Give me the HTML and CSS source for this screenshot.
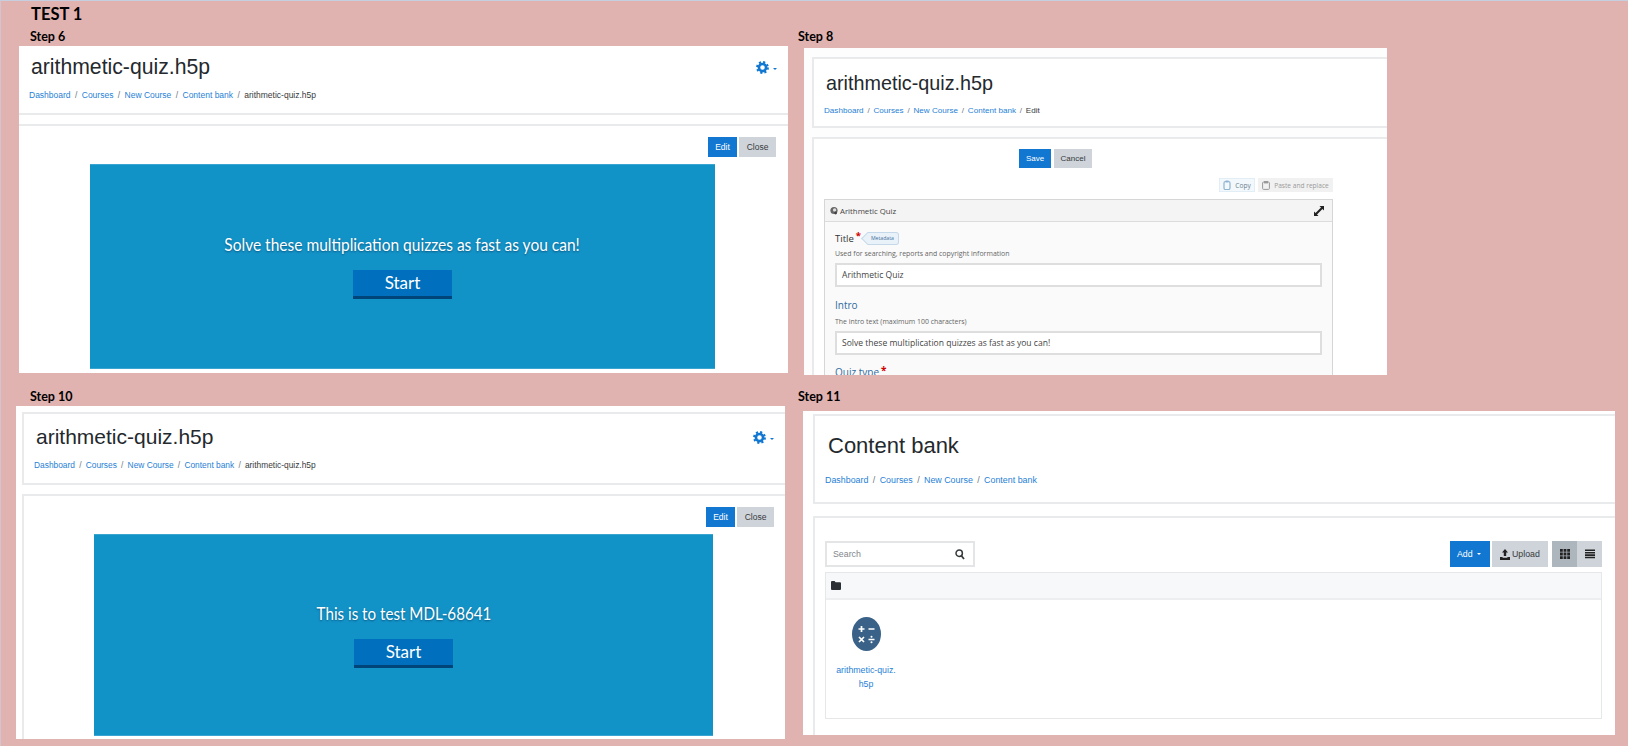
FILE: index.html
```html
<!DOCTYPE html>
<html lang="en">
<head>
    <meta charset="UTF-8">
    <title>Test 1</title>
    <link rel="stylesheet" href="styles.css">
</head>
<body>
    <svg class="icon-defs" width="0" height="0">
        <symbol id="gear" viewBox="0 0 16 16">
            <circle cx="8" cy="8" r="4.4" fill="none" stroke="currentColor" stroke-width="3.2"/>
            <circle cx="8" cy="8" r="6.6" fill="none" stroke="currentColor" stroke-width="2.6" stroke-dasharray="2.6 2.58"/>
        </symbol>
    </svg>

    <div class="sheet">
        <h1 class="test-title">TEST 1</h1>

        <div class="step-row">
            <section class="step step-6">
                <h2 class="step-label">Step 6</h2>
                <div class="shot shot-6">
                    <div class="card card-head">
                        <div class="head-top">
                            <h3 class="page-title">arithmetic-quiz.h5p</h3>
                            <span class="gear-menu"><svg class="gear"><use href="#gear"/></svg><i class="caret"></i></span>
                        </div>
                        <p class="crumbs"><a>Dashboard</a><b>/</b><a>Courses</a><b>/</b><a>New Course</a><b>/</b><a>Content bank</a><b>/</b><span>arithmetic-quiz.h5p</span></p>
                    </div>
                    <div class="card card-body">
                        <div class="toolbar">
                            <button class="btn btn-blue">Edit</button>
                            <button class="btn btn-grey">Close</button>
                        </div>
                        <div class="h5p-box">
                            <p class="h5p-text">Solve these multiplication quizzes as fast as you can!</p>
                            <div class="h5p-start">Start</div>
                        </div>
                    </div>
                </div>
            </section>

            <section class="step step-8">
                <h2 class="step-label">Step 8</h2>
                <div class="shot shot-8">
                    <div class="card card-head">
                        <h3 class="page-title">arithmetic-quiz.h5p</h3>
                        <p class="crumbs"><a>Dashboard</a><b>/</b><a>Courses</a><b>/</b><a>New Course</a><b>/</b><a>Content bank</a><b>/</b><span>Edit</span></p>
                    </div>
                    <div class="card card-body">
                        <div class="save-row">
                            <button class="btn btn-blue">Save</button>
                            <button class="btn btn-grey">Cancel</button>
                        </div>
                        <div class="clip-row">
                            <span class="clip-btn clip-copy">
                                <svg width="8" height="10" viewBox="0 0 8 10"><rect x="1" y="1.5" width="6" height="8" rx="1.5" fill="none" stroke="#8fb4d2" stroke-width="1.2"/><rect x="2.5" y="0.5" width="3" height="2" fill="#8fb4d2"/></svg>
                                Copy
                            </span>
                            <span class="clip-btn clip-paste">
                                <svg width="8" height="9" viewBox="0 0 8 9"><rect x="0.6" y="1" width="6.8" height="7.4" rx="1" fill="none" stroke="#999" stroke-width="1"/><rect x="2" y="0" width="4" height="2.4" fill="#999"/></svg>
                                Paste and replace
                            </span>
                        </div>
                        <div class="editor">
                            <div class="editor-head">
                                <span class="editor-name">
                                    <svg width="8" height="9" viewBox="0 0 8 9"><circle cx="4" cy="4.5" r="3.6" fill="#666"/><circle cx="4.6" cy="4" r="1.7" fill="#ddd"/><circle cx="5.6" cy="7" r="1.4" fill="#444"/></svg>
                                    Arithmetic Quiz
                                </span>
                                <svg class="expand" width="10" height="10" viewBox="0 0 11 11"><path d="M6 0h5v5L9.3 3.3 3.3 9.3 5 11H0V6l1.7 1.7 6-6z" fill="#222"/></svg>
                            </div>
                            <div class="editor-form">
                                <div class="field-label">Title<em>*</em><span class="meta-tag"><span>Metadata</span></span></div>
                                <p class="field-help">Used for searching, reports and copyright information</p>
                                <div class="field-input">Arithmetic Quiz</div>
                                <div class="field-label field-blue">Intro</div>
                                <p class="field-help">The intro text (maximum 100 characters)</p>
                                <div class="field-input">Solve these multiplication quizzes as fast as you can!</div>
                                <div class="field-label field-blue field-quiz">Quiz type<em>*</em></div>
                            </div>
                        </div>
                    </div>
                </div>
            </section>
        </div>

        <div class="step-row">
            <section class="step step-10">
                <h2 class="step-label">Step 10</h2>
                <div class="shot shot-10">
                    <div class="card card-head">
                        <div class="head-top">
                            <h3 class="page-title">arithmetic-quiz.h5p</h3>
                            <span class="gear-menu"><svg class="gear"><use href="#gear"/></svg><i class="caret"></i></span>
                        </div>
                        <p class="crumbs"><a>Dashboard</a><b>/</b><a>Courses</a><b>/</b><a>New Course</a><b>/</b><a>Content bank</a><b>/</b><span>arithmetic-quiz.h5p</span></p>
                    </div>
                    <div class="card card-body">
                        <div class="toolbar">
                            <button class="btn btn-blue">Edit</button>
                            <button class="btn btn-grey">Close</button>
                        </div>
                        <div class="h5p-box">
                            <p class="h5p-text">This is to test MDL-68641</p>
                            <div class="h5p-start">Start</div>
                        </div>
                    </div>
                </div>
            </section>

            <section class="step step-11">
                <h2 class="step-label">Step 11</h2>
                <div class="shot shot-11">
                    <div class="card card-head">
                        <h3 class="page-title">Content bank</h3>
                        <p class="crumbs"><a>Dashboard</a><b>/</b><a>Courses</a><b>/</b><a>New Course</a><b>/</b><a>Content bank</a></p>
                    </div>
                    <div class="card card-body">
                        <div class="bank-bar">
                            <div class="search">
                                <span>Search</span>
                                <svg width="10" height="11" viewBox="0 0 10 11"><circle cx="4.2" cy="4.2" r="3.2" fill="none" stroke="#373a3c" stroke-width="1.5"/><path d="M6.4 6.8 9 10" stroke="#373a3c" stroke-width="1.8"/></svg>
                            </div>
                            <div class="bank-actions">
                                <button class="btn btn-blue btn-add">Add<i class="caret"></i></button>
                                <button class="btn btn-grey btn-upload">
                                    <svg width="10" height="11" viewBox="0 0 10 11"><path d="M5 0 8 3.4H6.2V7H3.8V3.4H2zM0 8h2.6v.8h4.8V8H10v3H0z" fill="#222"/></svg>
                                    Upload
                                </button>
                                <div class="view-toggle">
                                    <span class="view-on">
                                        <svg width="10" height="10" viewBox="0 0 10 10"><path d="M0 0h2.8v2.8H0zM3.6 0h2.8v2.8H3.6zM7.2 0H10v2.8H7.2zM0 3.6h2.8v2.8H0zM3.6 3.6h2.8v2.8H3.6zM7.2 3.6H10v2.8H7.2zM0 7.2h2.8V10H0zM3.6 7.2h2.8V10H3.6zM7.2 7.2H10V10H7.2z" fill="#222"/></svg>
                                    </span>
                                    <span>
                                        <svg width="10" height="10" viewBox="0 0 10 10"><path d="M0 .5h10v1.6H0zM0 2.9h10v1.6H0zM0 5.3h10v1.6H0zM0 7.7h10v1.6H0z" fill="#222"/></svg>
                                    </span>
                                </div>
                            </div>
                        </div>
                        <div class="bank-table">
                            <div class="bank-path">
                                <svg width="10" height="9" viewBox="0 0 10 9"><path d="M0 1q0-1 1-1h2.6l1 1.3H9q1 0 1 1V8q0 1-1 1H1Q0 9 0 8z" fill="#2b2f33"/></svg>
                            </div>
                            <div class="bank-files">
                                <a class="bank-file">
                                    <svg width="29" height="34" viewBox="0 0 29 34">
                                        <ellipse cx="14.5" cy="17" rx="14.5" ry="17" fill="#3a6288"/>
                                        <path d="M6.5 12h6M9.5 9v6M16.5 12h6M7 20l5 5M12 20l-5 5M16.5 22.5h6" stroke="#fff" stroke-width="1.7" fill="none"/>
                                        <circle cx="19.5" cy="19.8" r="1" fill="#fff"/>
                                        <circle cx="19.5" cy="25.2" r="1" fill="#fff"/>
                                    </svg>
                                    <span>arithmetic-quiz.<br>h5p</span>
                                </a>
                            </div>
                        </div>
                    </div>
                </div>
            </section>
        </div>
    </div>
</body>
</html>
```

FILE: styles.css
```css
*{
    box-sizing: border-box;
    margin: 0;
    padding: 0;
}

body{
    background-color: #e0b2b0;
    font-family: "Liberation Sans", Arial, sans-serif;
}

.icon-defs{
    display: block;
}

.sheet{
    width: 1628px;
    height: 746px;
    overflow: hidden;
    border-top: 1px solid #c6cfe0;
    border-left: 1px solid #d3c4d0;
    background-color: #e0b2b0;
}

.test-title{
    height: 28px;
    padding: 3px 0 0 30px;
    font: 700 16.5px/20px Lato, sans-serif;
    color: #000;
}

.step-row{
    display: flex;
    height: 360px;
}

.step-label{
    height: 16px;
    font: 700 12.5px/16px Lato, sans-serif;
    color: #000;
}

.step-6, .step-10{
    width: 779px;
}
.step-6 .step-label, .step-10 .step-label{
    padding-left: 29px;
}
.step-8 .step-label, .step-11 .step-label{
    padding-left: 18px;
}

.shot{
    overflow: hidden;
    background-color: #fff;
}
.shot-6{
    width: 769px;
    height: 327px;
    margin: 1px 0 0 18px;
}
.shot-8{
    width: 583px;
    height: 327px;
    margin: 3px 0 0 24px;
    padding: 9px 0 0 8px;
    background-color: #fdfdfd;
}
.shot-10{
    width: 769px;
    height: 333px;
    margin: 1px 0 0 15px;
    padding: 6px 0 0 6px;
}
.shot-11{
    width: 812px;
    height: 324px;
    margin: 6px 0 0 23px;
    padding: 3px 0 0 10px;
}

.card{
    background-color: #fff;
    border: 2px solid #e9eaeb;
    border-right: 0;
}

.card-head{
    height: 72px;
}
.card-body{
    height: 400px;
    margin-top: 9px;
}

.head-top{
    display: flex;
    justify-content: space-between;
    align-items: center;
}

.page-title{
    font-weight: 400;
    font-size: 21px;
    line-height: 30px;
    color: #24292d;
}

.crumbs{
    font-size: 8.5px;
    line-height: 16px;
    white-space: nowrap;
    color: #373a3c;
}
.crumbs a, .bank-file{
    color: #1f7fd6;
}
.crumbs b{
    margin: 0 4.4px;
    font-weight: 400;
    color: #6c757d;
}

.gear-menu{
    display: flex;
    align-items: center;
    gap: 4px;
    color: #1177d1;
}
.gear{
    display: block;
    width: 13px;
    height: 13px;
}
.gear-menu .caret{
    margin-top: 3px;
}
.caret{
    display: block;
    width: 0;
    height: 0;
    border: 2px solid transparent;
    border-top-color: currentColor;
    border-bottom: 0;
}

.btn{
    display: block;
    height: 20px;
    border: 0;
    font: 8.5px "Liberation Sans", Arial, sans-serif;
}
.btn-blue{
    background-color: #1177d1;
    color: #fff;
}
.btn-grey{
    background-color: #ced4da;
    color: #373a3c;
}

.toolbar{
    display: flex;
    justify-content: flex-end;
    gap: 2px;
    padding-right: 11px;
}
.toolbar .btn-blue{
    width: 29px;
}
.toolbar .btn-grey{
    width: 37px;
}

.h5p-box{
    display: flex;
    flex-direction: column;
    align-items: center;
    justify-content: center;
    gap: 14px;
    border-top: 1px solid #3aa5d0;
    border-bottom: 1px solid #3aa5d0;
    background-color: #1293c7;
}
.h5p-text{
    font: 16.5px/22px Lato, sans-serif;
    color: #fff;
    text-shadow: 0 1px 2px rgba(0, 50, 90, 0.6);
    transform: scaleX(0.94);
}
.shot-10 .h5p-text{
    transform: scaleX(0.92);
}
.h5p-start{
    width: 99px;
    height: 29px;
    border-bottom: 3px solid #00457a;
    background-color: #006fbd;
    font: 17px/26px Lato, sans-serif;
    text-align: center;
    color: #fff;
}

/* step 6 */
.shot-6 .card-head{
    height: 69px;
    border-width: 0 0 2px;
    padding: 6px 11px 0 12px;
}
.shot-6 .page-title{
    font-size: 21.2px;
}
.shot-6 .crumbs{
    margin: 5px 0 0 -2px;
}
.shot-6 .card-body{
    border-width: 2px 0 0;
    padding-top: 11px;
}
.shot-6 .toolbar{
    padding-right: 12px;
}
.shot-6 .h5p-box{
    width: 625px;
    height: 205px;
    margin: 7px 0 0 71px;
}

/* step 8 */
.shot-8 .card-head{
    height: 71px;
    padding: 9px 0 0 12px;
}
.shot-8 .page-title{
    font-size: 19.8px;
}
.shot-8 .crumbs{
    margin: 5px 0 0 -2px;
    font-size: 8.1px;
}
.shot-8 .crumbs b{
    margin: 0 3.8px;
}
.shot-8 .card-body{
    padding: 10px 0 0 10px;
}
.save-row{
    display: flex;
    gap: 3px;
    margin-left: 195px;
}
.save-row .btn{
    height: 19px;
    font-size: 8px;
}
.save-row .btn-blue{
    width: 32px;
}
.save-row .btn-grey{
    width: 38px;
}
.clip-row{
    display: flex;
    justify-content: flex-end;
    gap: 3px;
    width: 509px;
    margin-top: 10px;
}
.clip-btn{
    display: flex;
    align-items: center;
    justify-content: center;
    gap: 4px;
    height: 14px;
    font: 6.6px "Open Sans", sans-serif;
}
.clip-copy{
    width: 36px;
    border: 1px solid #e2eef6;
    background-color: #f2f8fc;
    color: #6b7f8f;
}
.clip-paste{
    width: 75px;
    background-color: #f1f1f1;
    color: #9a9a9a;
}
.editor{
    width: 509px;
    height: 300px;
    margin-top: 7px;
    border: 1px solid #d6d6d6;
    background-color: #fafafa;
    font-family: "Open Sans", sans-serif;
}
.editor-head{
    display: flex;
    justify-content: space-between;
    align-items: center;
    height: 22px;
    padding: 0 5px;
    border-bottom: 1px solid #dcdcdc;
    background-color: #f4f4f4;
}
.editor-name{
    display: flex;
    align-items: center;
    gap: 2px;
    font-size: 7.8px;
    color: #444;
}
.expand{
    margin-right: 3px;
}
.editor-form{
    padding: 9px 10px 0;
}
.field-label{
    display: flex;
    align-items: center;
    height: 14px;
    font-size: 9.5px;
    color: #333;
}
.field-label em{
    align-self: flex-start;
    margin-left: 2px;
    font-style: normal;
    font-weight: 700;
    line-height: 10px;
    color: #d00000;
}
.field-blue{
    margin-top: 11px;
    color: #2f6a9f;
    font-size: 10px;
}
.field-quiz{
    margin-top: 10px;
}
.meta-tag{
    position: relative;
    display: block;
    width: 32px;
    height: 13px;
    margin-left: 6px;
    border: 1px solid #c5d8ea;
    border-left: 0;
    border-radius: 0 3px 3px 0;
    background-color: #eaf2f9;
    font-size: 5.2px;
    line-height: 11px;
    text-align: center;
    color: #3f6e9c;
}
.meta-tag::before{
    content: "";
    position: absolute;
    top: 1.5px;
    left: -4px;
    width: 8px;
    height: 8px;
    border-left: 1px solid #c5d8ea;
    border-bottom: 1px solid #c5d8ea;
    background-color: #eaf2f9;
    transform: rotate(45deg);
}
.meta-tag span{
    position: relative;
}
.field-help{
    margin-top: 4px;
    font-size: 6.95px;
    line-height: 10px;
    color: #666;
}
.field-blue + .field-help{
    margin-top: 5px;
}
.field-input{
    height: 24px;
    margin-top: 4px;
    padding-left: 5px;
    border: 2px solid #dedede;
    background-color: #fff;
    font-size: 8.55px;
    line-height: 20px;
    color: #444;
}

/* step 10 */
.shot-10 .card-head{
    height: 73px;
    padding: 8px 11px 0 12px;
}
.shot-10 .crumbs{
    margin: 5px 0 0 -2px;
    font-size: 8.4px;
}
.shot-10 .crumbs b{
    margin: 0 4.2px;
}
.shot-10 .card-body{
    padding-top: 11px;
}
.shot-10 .h5p-box{
    width: 619px;
    height: 202px;
    margin: 7px 0 0 70px;
}

/* step 11 */
.shot-11 .card-head{
    height: 90px;
    padding: 15px 0 0 13px;
}
.shot-11 .page-title{
    font-size: 22px;
}
.shot-11 .crumbs{
    margin: 11px 0 0 -3px;
    font-size: 8.9px;
}
.shot-11 .card-body{
    margin-top: 12px;
    padding: 23px 13px 0 10px;
}
.bank-bar{
    display: flex;
    justify-content: space-between;
    height: 26px;
}
.search{
    display: flex;
    justify-content: space-between;
    align-items: center;
    width: 150px;
    padding: 0 8px 0 6px;
    border: 2px solid #e3e5e7;
    font-size: 8.8px;
    color: #7f868c;
}
.bank-actions{
    display: flex;
}
.bank-actions .btn{
    display: flex;
    align-items: center;
    height: 26px;
    font-size: 8.8px;
}
.btn-add{
    gap: 4px;
    width: 40px;
    margin-right: 2px;
    padding-left: 7px;
}
.btn-upload{
    gap: 2px;
    width: 56px;
    margin-right: 4px;
    padding-left: 8px;
}
.view-toggle{
    display: flex;
    background-color: #ced4da;
}
.view-toggle span{
    display: flex;
    align-items: center;
    justify-content: center;
    width: 25px;
}
.view-toggle .view-on{
    background-color: #adb5bd;
}
.bank-table{
    height: 147px;
    margin-top: 5px;
    border: 1px solid #e5e7e9;
}
.bank-path{
    display: flex;
    align-items: center;
    height: 27px;
    padding-left: 5px;
    border-bottom: 2px solid #eceef0;
    background-color: #f7f8fa;
}
.bank-file{
    display: flex;
    flex-direction: column;
    align-items: center;
    width: 70px;
    margin: 17px 0 0 5px;
    font-size: 8.8px;
    line-height: 14px;
    text-align: center;
}
.bank-file span{
    margin-top: 12px;
}
```
